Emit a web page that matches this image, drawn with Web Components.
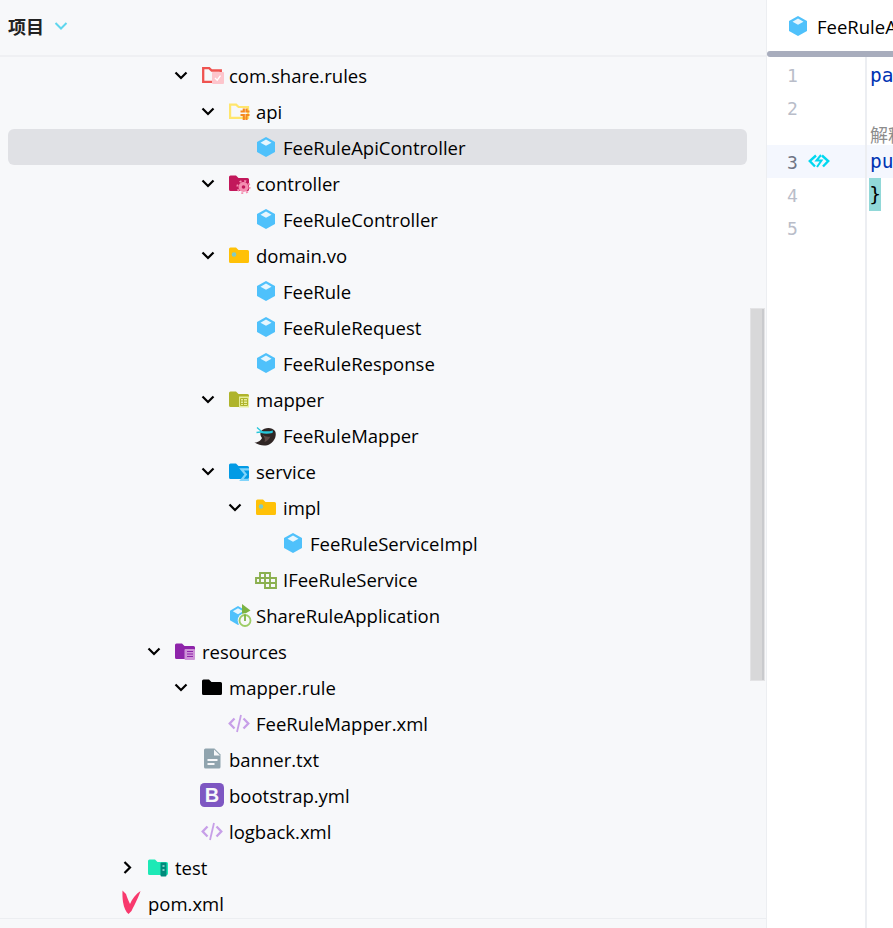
<!DOCTYPE html>
<html lang="zh"><head><meta charset="utf-8"><title>项目</title>
<style>html,body{margin:0;height:100%;background:#f7f8fa}body{font-family:"Open Sans","Noto Sans CJK SC",sans-serif;overflow:hidden}</style>
</head><body>
<ide-window>
  <project-panel>
    <tree-row level="5" open icon="pkg">com.share.rules</tree-row>
    <tree-row level="6" open icon="api">api</tree-row>
    <tree-row level="7" icon="cube" selected>FeeRuleApiController</tree-row>
    <tree-row level="6" open icon="ctrl">controller</tree-row>
    <tree-row level="7" icon="cube">FeeRuleController</tree-row>
    <tree-row level="6" open icon="vo">domain.vo</tree-row>
    <tree-row level="7" icon="cube">FeeRule</tree-row>
    <tree-row level="7" icon="cube">FeeRuleRequest</tree-row>
    <tree-row level="7" icon="cube">FeeRuleResponse</tree-row>
    <tree-row level="6" open icon="mapper">mapper</tree-row>
    <tree-row level="7" icon="bird">FeeRuleMapper</tree-row>
    <tree-row level="6" open icon="service">service</tree-row>
    <tree-row level="7" open icon="vo">impl</tree-row>
    <tree-row level="8" icon="cube">FeeRuleServiceImpl</tree-row>
    <tree-row level="7" icon="iface">IFeeRuleService</tree-row>
    <tree-row level="6" icon="boot">ShareRuleApplication</tree-row>
    <tree-row level="4" open icon="res">resources</tree-row>
    <tree-row level="5" open icon="black">mapper.rule</tree-row>
    <tree-row level="6" icon="xml">FeeRuleMapper.xml</tree-row>
    <tree-row level="5" icon="txt">banner.txt</tree-row>
    <tree-row level="5" icon="b">bootstrap.yml</tree-row>
    <tree-row level="5" icon="xml">logback.xml</tree-row>
    <tree-row level="3" closed icon="test">test</tree-row>
    <tree-row level="2" icon="pom">pom.xml</tree-row>
  </project-panel>
  <editor-panel></editor-panel>
</ide-window>
<script>
const F='M3 5a1.500 1.500 0 0 1 1.500-1.500H10L12.500 6H21.500A1.500 1.500 0 0 1 23 7.500V17.500A1.500 1.500 0 0 1 21.500 19H4.500A1.500 1.500 0 0 1 3 17.500Z';
const CUBE='<g transform="translate(1 0)"><path fill="#4fc1fb" d="M12 1 21 6V16L12 21 3 16V6Z"/><path fill="#e6f6fe" d="M12 3.500 17.500 6.700 12 9.800 6.500 6.700Z"/></g>';
const XML='<path fill="none" stroke="#c79fe8" stroke-width="2.300" d="M8.500 6.500 3.700 11.500 8.500 16.500M17.500 6.500 22.300 11.500 17.500 16.500"/><path fill="none" stroke="#c79fe8" stroke-width="1.800" d="M15 3 11 20"/>';
const ICONS={
 pkg:`<path fill="none" stroke="#ef5350" stroke-width="2.300" d="M4.200 4.200h6l2.500 2.300H21.800V17.800H4.200Z"/><rect x="13" y="8" width="12" height="12" rx="1" fill="#fdc5cc"/><path fill="none" stroke="#fff" stroke-width="1.300" d="M16 14l2.200 2.200 3.300-4.500"/>`,
 api:`<path fill="none" stroke="#ffe66d" stroke-width="2.200" d="M4.100 4.600h6l2.500 2.400H22V17.800H4.100Z"/><path fill="none" stroke="#f58a1f" stroke-width="2.200" d="M14.500 11.500h3.300V8.500M23.500 11.500H20.500V8.500M14.500 15h3.300V20M23.500 15H20.500V20"/>`,
 ctrl:`<path fill="#c2185b" d="${F}"/><circle cx="17.500" cy="15" r="5" fill="#f48fb1"/><circle cx="17.500" cy="15" r="6.200" fill="none" stroke="#f48fb1" stroke-width="1.800" stroke-dasharray="2 2.870"/><circle cx="17.500" cy="15" r="1.800" fill="#c2185b"/>`,
 vo:`<path fill="#ffc107" d="${F}"/><circle cx="8" cy="10.500" r="2.300" fill="#80cbc4"/>`,
 mapper:`<path fill="#afb42b" d="${F}"/><rect x="13" y="8.500" width="10" height="11" fill="#e6ee9c"/><path fill="none" stroke="#afb42b" stroke-width="1" d="M14.500 10.500h7v7h-7zM14.500 13h7M14.500 15.500h7M17.500 10.500v7"/>`,
 service:`<path fill="#039be5" d="${F}"/><path fill="none" stroke="#81d4fa" stroke-width="2.200" d="M23 9.300H15.500L19.800 14.500 15.500 19.800H23"/>`,
 res:`<path fill="#8e24aa" d="${F}"/><rect x="12.500" y="9" width="10.500" height="11" rx="1" fill="#ce93d8"/><path stroke="#8e24aa" stroke-width="1" d="M15 11.500h6M15 14h6M15 16.500h6"/>`,
 black:`<path fill="#000" d="${F}"/>`,
 test:`<path fill="#1de9b6" d="${F}"/><rect x="15.500" y="6.500" width="6" height="14" rx="1" fill="#00897b"/><rect x="17.500" y="9" width="2" height="2" fill="#80cbc4"/><rect x="17.500" y="13" width="2" height="2" fill="#80cbc4"/>`,
 cube:CUBE,
 xml:XML,
 txt:`<g transform="translate(1.500 0)"><path fill="#90a4ae" d="M5 .5h9l6 6v12.500a1.500 1.500 0 0 1-1.500 1.500h-13.500a1.500 1.500 0 0 1-1.500-1.500V2A1.500 1.500 0 0 1 5 .5Z"/><path stroke="#f7f8fa" stroke-width="1.800" d="M7 12h10M7 16h7"/><path fill="#f7f8fa" d="M13.500 1.500V7.500H19.500Z"/></g>`,
 b:`<rect x="1" y="-1" width="24" height="24" rx="4.500" fill="#7e57c2"/><text x="13" y="18" text-anchor="middle" font-family="Liberation Sans" font-weight="700" font-size="20" fill="#f7f8fa">B</text>`,
 iface:`<path fill="none" stroke="#8bb04f" stroke-width="1.900" d="M7 5h10v5H7ZM12 5v5M3 10h20v5H3ZM7 10v5M12 10v5M17 10v5M12 15h11v5H12ZM17 15v5"/>`,
 boot:`<path fill="#4fc1fb" d="M12 2 20 6.700V16.300L12 21 4 16.300V6.700Z"/><path fill="#e6f6fe" d="M12 4.300 17.200 7.300 12 10.300 6.800 7.300Z"/><path fill="#7cb342" d="M16 0 24.500 6.500 16 11.500Z"/><circle cx="19" cy="16.500" r="7.300" fill="#f7f8fa"/><circle cx="19" cy="16.500" r="5.500" fill="none" stroke="#9ccc65" stroke-width="1.800"/><path stroke="#7cb342" stroke-width="1.800" d="M19 10.500V17"/>`,
 bird:`<path fill="#2f2524" d="M8 7C12 3 19 3 22 7 24 11 22 17 17 20 13 22.500 7 22 1.500 18.500 6 18.500 8 16 9 14 7 12 7 9 8 7Z"/><path fill="#5d4a47" d="M9.500 10.500C12 12.500 14 13 17.500 12.500 16 15.500 14 17 11.500 18 12.500 15.500 11.500 13 9.500 10.500Z"/><path fill="#26c6da" d="M7.500 6.500C11 7.500 15 7.800 20 6.500L19.500 9C15 10 11 9.800 8 9Z"/><path fill="none" stroke="#26c6da" stroke-width="1.300" d="M8 7 4 3.500M8 8 3.500 8.500"/>`,
 pom:`<path fill="#f8396d" d="M4.500-1.500 8 2C9 5 10.500 9 12 12 14 7 18 2 22.500-1 21 4 17 12 13.500 19L10.500 22C8 20 6 16 5 10 4.500 6 4.300 3 4.500-1.500Z"/>`
};
class TreeIcon extends HTMLElement{connectedCallback(){const n=this.getAttribute('name');this.attachShadow({mode:'open'}).innerHTML=`<style>:host{display:block;width:24px;height:24px;flex:none}svg{display:block;overflow:visible}</style><svg width="24" height="24" viewBox="0 0 24 24">${ICONS[n]||''}</svg>`;}}
customElements.define('tree-icon',TreeIcon);
class TreeRow extends HTMLElement{connectedCallback(){
 const open=this.hasAttribute('open'),closed=this.hasAttribute('closed');
 const ch=open?'M6.500 8.500 12 14 17.500 8.500':closed?'M9.500 6 15 11.500 9.500 17':'';
 this.attachShadow({mode:'open'}).innerHTML=`<style>
 :host{display:flex;align-items:center;height:36px;box-sizing:border-box;margin:0 19px 0 8px;padding:2px 0 0 calc(53px + 27px*var(--level));border-radius:6px;color:#000;font-size:18.500px;white-space:nowrap;flex:none}
 :host([selected]){background:#e0e1e5}
 .c{width:24px;height:24px;flex:none;margin-right:6px}
 svg{display:block}
 .l{margin-left:6px;line-height:34px}
 </style><svg class="c" viewBox="0 0 24 24" width="24" height="24"><path d="${ch}" fill="none" stroke="#000" stroke-width="2.200"/></svg><tree-icon name="${this.getAttribute('icon')}"></tree-icon><span class="l"><slot></slot></span>`;
 this.style.setProperty('--level',+this.getAttribute('level')-1);
}}
customElements.define('tree-row',TreeRow);
class ProjectPanel extends HTMLElement{constructor(){super();this.attachShadow({mode:'open'}).innerHTML=`<style>
 :host{display:flex;flex-direction:column;width:766px;height:100%;flex:none;position:relative;border-right:1px solid #eceef1;background:#f7f8fa}
 header{flex:none;display:flex;align-items:center;gap:10px;padding:0 0 3px 8px;box-sizing:border-box;border-bottom:2px solid #eff0f3;height:57px;font-size:18px;font-weight:700;color:#222;font-family:"Noto Sans CJK SC",sans-serif}
 .tree{flex:1;min-height:0;overflow:hidden;display:flex;flex-direction:column}
 .thumb{position:absolute;left:750px;top:308px;width:15px;height:373px;box-sizing:border-box;background:#d8d8d9;border:1px solid #e3e3e5;box-shadow:inset -2px 0 #c9cacd}
 footer{height:10px;flex:none;border-top:1px solid #eceef1;box-sizing:border-box}
 </style><header><span>项目</span><svg width="14" height="10" viewBox="0 0 14 10"><path d="M1.500 2 7 7.500 12.500 2" fill="none" stroke="#5fd6ee" stroke-width="2"/></svg></header><div class="tree"><slot></slot></div><footer></footer><div class="thumb"></div>`;}}
customElements.define('project-panel',ProjectPanel);
class EditorPanel extends HTMLElement{constructor(){super();this.attachShadow({mode:'open'}).innerHTML=`<style>
 :host{display:flex;flex-direction:column;flex:1;min-width:0;height:100%;background:#fff;overflow:hidden;font-family:"Open Sans","Noto Sans CJK SC",sans-serif}
 .tab{height:51px;display:flex;align-items:center;gap:8px;padding:3px 0 0 18px;box-sizing:border-box;font-size:18.500px;color:#000;white-space:nowrap;flex:none;overflow:hidden}
 .tab span{margin-top:-2px}
 .bar{height:6px;background:#a8adbd;border-radius:3px 0 0 3px;flex:none}
 .body{flex:1;display:grid;grid-template-columns:100px 1fr;min-height:0}
 .gutter{border-right:2px solid #eceef2;display:flex;flex-direction:column;padding-top:2px;color:#b9bdc9;font-family:"DejaVu Sans Mono",monospace;font-size:18px}
 .n{height:33px;display:flex;align-items:center;padding-left:20px;gap:10px;box-sizing:border-box}
 .n:nth-child(n+3){padding-top:2px}
 .n.h{background:#f4f7fe;color:#6f7484;margin-top:20px}
 .n svg{margin-top:-3px}
 .code{display:flex;flex-direction:column;padding-top:2px;font-family:"DejaVu Sans Mono",monospace;font-size:19.500px;overflow:hidden;white-space:nowrap}
 .ln{height:33px;line-height:33px;padding-left:3px;color:#0033b3;flex:none}
 .hint{height:20px;line-height:18px;padding-left:3px;color:#8c8c8c;font-family:"Noto Sans CJK SC",sans-serif;font-size:18px;flex:none}
 .h{background:#f4f7fe}
 .br{display:inline-block;background:#91d8d8;color:#000;height:33px;width:12px;margin-left:-1px;text-align:center}
 </style>
 <div class="tab"><tree-icon name="cube"></tree-icon><span>FeeRuleA</span></div><div class="bar"></div>
 <div class="body"><div class="gutter"><div class="n">1</div><div class="n">2</div><div class="n h">3<svg width="22" height="14" viewBox="0 0 22 14"><path d="M8 1.500 1.800 7 7 12.500M14 1.500 20.200 7 15 12.500" fill="none" stroke="#00d8f0" stroke-width="2.400"/><path d="M13 1 8.500 6.500H13.500L9 13" fill="none" stroke="#00d8f0" stroke-width="2"/></svg></div><div class="n">4</div><div class="n">5</div></div>
 <div class="code"><div class="ln">pa</div><div class="ln"></div><div class="hint">解释</div><div class="ln h">pu</div><div class="ln"><span class="br">}</span></div></div></div>`;}}
customElements.define('editor-panel',EditorPanel);
class IdeWindow extends HTMLElement{constructor(){super();this.attachShadow({mode:'open'}).innerHTML=`<style>:host{display:flex;width:893px;height:928px;overflow:hidden}</style><slot></slot>`;}}
customElements.define('ide-window',IdeWindow);
</script>
</body></html>
